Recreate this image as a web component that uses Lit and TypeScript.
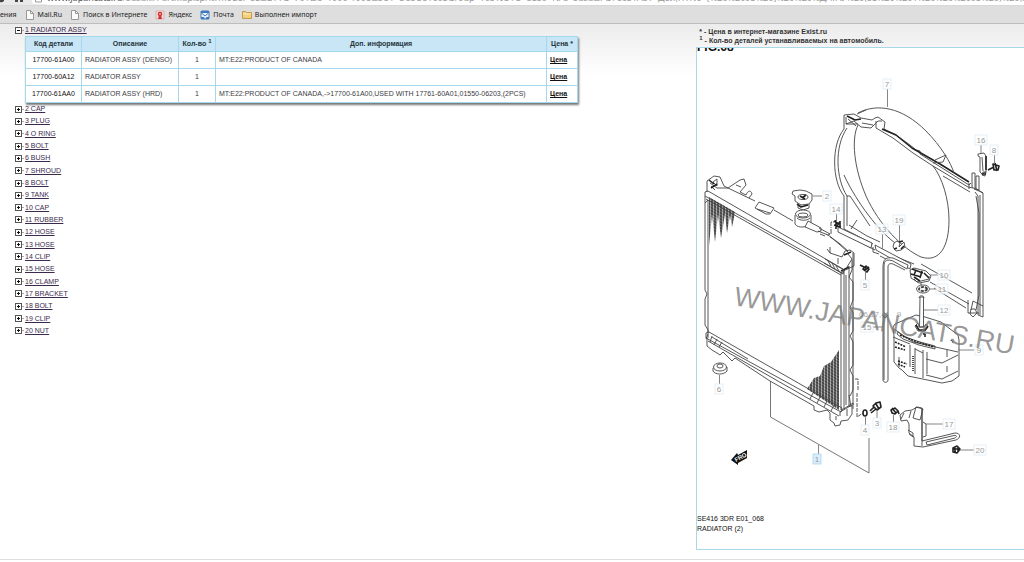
import { LitElement, html, svg, css } from "lit";
import { customElement, property } from "lit/decorators.js";

type Part = { code: string; name: string; qty: number; info: string };

const PARTS: Part[] = [
  { code: "17700-61A00", name: "RADIATOR ASSY (DENSO)", qty: 1, info: "MT:E22:PRODUCT OF CANADA" },
  { code: "17700-60A12", name: "RADIATOR ASSY", qty: 1, info: "" },
  { code: "17700-61AA0", name: "RADIATOR ASSY (HRD)", qty: 1, info: "MT:E22:PRODUCT OF CANADA,->17700-61A00,USED WITH 17761-60A01,01550-06203,(2PCS)" },
];

const GROUPS = [
  "2 CAP", "3 PLUG", "4 O RING", "5 BOLT", "6 BUSH", "7 SHROUD", "8 BOLT", "9 TANK", "10 CAP", "11 RUBBER",
  "12 HOSE", "13 HOSE", "14 CLIP", "15 HOSE", "16 CLAMP", "17 BRACKET", "18 BOLT", "19 CLIP", "20 NUT",
];

const CALLOUTS: [string, number, number][] = [
  ["7", 887, 84], ["16", 981, 140], ["8", 994, 150], ["2", 827, 196], ["14", 836, 209], ["19", 899, 220],
  ["13", 882, 229], ["5", 865, 285], ["10", 944, 275], ["11", 942, 289], ["12", 944, 310], ["15", 867, 327],
  ["9", 979, 350], ["6", 719, 389], ["3", 877, 423], ["4", 865, 430], ["18", 893, 427], ["17", 949, 424],
  ["20", 980, 450], ["1", 817, 459],
];

const LEADERS =
  "M887.500 89V107M981 145V153M994.500 155V164M822 196H813M836.500 213V222M899.500 225V241M882.500 234V249M865.500 280V271" +
  "M938 275H930M936 289H929M938 310H924M873 327H884M974 350H958M719.500 384V375M877 418V411M865.500 425V416M893.500 422V415M943 424H926M974 450H960M818.500 445V454";

@customElement("browser-bar")
export class BrowserBar extends LitElement {
  static styles = css`
    :host { display: block; font-family: "Noto Sans", "Liberation Sans", sans-serif; }
    .address { display: flex; align-items: flex-end; height: 6px; overflow: hidden; background: #fff; border-bottom: 1px solid #d8d8d8; box-sizing: border-box; }
    .nav { display: block; width: 47px; height: 6px; flex: none; background: #e9e9e9; }
    .host, .path { height: 14px; font: 9px/14px "Noto Sans", sans-serif; color: #999; }
    .host { color: #555; flex: none; }
    .path { flex: 1; min-width: 0; border: 0; padding: 0; margin: 0; background: none; outline: none; }
    .bookmarks { display: flex; align-items: center; height: 17px; background: #dedede; border-bottom: 1px solid #bdbdbd; }
    .bookmark { display: flex; align-items: center; gap: 3px; margin-right: 8px; font-size: 7px; line-height: 16px; color: #222; text-decoration: none; white-space: nowrap; }
    .icon { width: 10px; height: 10px; flex: none; }
  `;

  private page = svg`<path d="M1.500.500h4l3 3v6h-7z" fill="#fafafa" stroke="#999"/><path d="M5.500.500v3h3" fill="none" stroke="#999"/>`;

  private mark(icon: unknown, text: string) {
    return html`<a class="bookmark" href="#"><svg class="icon" viewBox="0 0 10 10" aria-hidden="true">${icon}</svg>${text}</a>`;
  }

  render() {
    return html`
      <div class="address">
        <svg class="nav" viewBox="0 0 47 6" aria-hidden="true">
          <path d="M0 0h4v2q-2 2-4 1z" fill="#444"/><path d="M15 0h3v3h-3zM20 0h3v3h-3z" fill="#444"/>
          <path d="M32 0h15v5H34q-2 0-2-3z" fill="#fff"/><path d="M35.500 0v3h6v-3" fill="none" stroke="#999"/>
        </svg>
        <label class="host" for="url">www.japancats.ru</label>
        <input class="path" id="url" readonly value="/Suzuki/PartMap.sprit?model=SE&BTTG=701&C=1990-1998&SUT=3C8OST603Group=Y05TIOTO=SE59=NAI=Suzu&FGTC631AST=Дей(HTNo=[%20%2093%20]%20%20%ДАТАУ%20(SE%20%201%20%20%2093%20)%20(SE%20)" />
      </div>
      <nav class="bookmarks">
        <a class="bookmark" href="#">ения</a>
        ${this.mark(this.page, "Mail.Ru")}
        ${this.mark(this.page, "Поиск в Интернете")}
        ${this.mark(svg`<path d="M1 1h8v8H1z" fill="#f6dcdc" stroke="#c99" stroke-width=".6"/><circle cx="5" cy="4" r="2.300" fill="#c33"/><path d="M3 9l1-4h2l1 4z" fill="#c33"/><circle cx="5" cy="4" r=".8" fill="#fff"/>`, "Яндекс")}
        ${this.mark(svg`<rect x=".5" y=".5" width="9" height="9" rx="1.500" fill="#3d79bd"/><path d="M1.500 3h7v4h-2l-1.500 2L4 7H1.500z" fill="#e9f2fb"/><path d="M1.500 3L5 6l3.500-3" fill="none" stroke="#3d79bd"/>`, "Почта")}
        ${this.mark(svg`<path d="M.5 8.500v-7h3l1 1h5v6z" fill="#f3cf7b" stroke="#b98b35" stroke-width=".8"/><path d="M1 4h8" stroke="#fff0bd"/>`, "Выполнен импорт")}
      </nav>
    `;
  }
}

@customElement("tree-item")
export class TreeItem extends LitElement {
  @property() label = "";
  @property({ type: Boolean }) open = false;
  static styles = css`
    :host { display: flex; align-items: center; font: 7px/12px "Liberation Sans", Arial, sans-serif; }
    .toggle { width: 10px; height: 7px; padding: 0; border: 0; background: none; display: flex; flex: none; }
    .sign { width: 10px; height: 7px; }
    .link { color: #3b2a4d; text-decoration: underline; white-space: nowrap; }
  `;
  render() {
    return html`
      <button class="toggle" aria-label=${this.label}>
        <svg class="sign" viewBox="0 0 10 7" fill="none" shape-rendering="crispEdges">
          <path d="M.5.500h6v6h-6z" fill="#fff" stroke="#555"/>
          <path d="M2 3.500h3" stroke="#111"/>
          ${this.open ? "" : svg`<path d="M3.500 2v3" stroke="#111"/>`}
          <path d="M7 3.500h2" stroke="#aaa"/>
        </svg>
      </button>
      <a class="link" href="#">${this.label}</a>
    `;
  }
}

@customElement("parts-table")
export class PartsTable extends LitElement {
  static styles = css`
    :host { display: block; font: 7px/10px "Liberation Sans", Arial, sans-serif; color: #3c3c44; }
    .table { table-layout: fixed; width: 553px; border-collapse: collapse; background: #fff; box-shadow: 1px 2px 2px #777; }
    .code { width: 56px; }
    .name { width: 97px; }
    .qty { width: 37px; }
    .price { width: 31px; }
    th, td { border: 1px solid #a5d8ec; padding: 3px; white-space: nowrap; text-align: left; }
    th { background: #c8e6f5; color: #26333b; text-align: center; padding: 2px 0; }
    td.num { color: #111; text-align: center; padding: 3px 0; }
    td.count { text-align: center; }
    .buy { color: #111; font-weight: bold; }
    sup { font-size: 6px; line-height: 0; }
  `;
  render() {
    return html`
      <table class="table">
        <colgroup><col class="code" /><col class="name" /><col class="qty" /><col /><col class="price" /></colgroup>
        <thead><tr><th>Код детали</th><th>Описание</th><th>Кол-во <sup>1</sup></th><th>Доп. информация</th><th>Цена *</th></tr></thead>
        <tbody>
          ${PARTS.map((p) => html`<tr>
            <td class="num">${p.code}</td><td>${p.name}</td><td class="count">${p.qty}</td><td>${p.info}</td>
            <td><a class="buy" href="#">Цена</a></td>
          </tr>`)}
        </tbody>
      </table>
    `;
  }
}

@customElement("parts-diagram")
export class PartsDiagram extends LitElement {
  static styles = css`
    :host { display: block; overflow: hidden; background: #fff; border: 1px solid #a9d9e8; border-right: 0; }
    .drawing { display: block; width: 400px; height: 501px; font-family: "Liberation Sans", Arial, sans-serif; }
    .ink { fill: none; stroke: #444; stroke-width: 0.9; stroke-linejoin: round; }
    .solid { fill: #fff; }
    .heavy { stroke-width: 1.6; stroke: #222; }
    .leader { fill: none; stroke: #777; stroke-width: 0.9; }
    .box { fill: #fff; fill-opacity: 0.7; stroke: #dcebf3; stroke-width: 0.8; }
    .box.on { fill: #cbe6f8; stroke: #a9d4ee; }
    .num { font-size: 8px; fill: #999; text-anchor: middle; }
    .mark { font-size: 27px; fill: #777; fill-opacity: 0.75; }
    .faint { font-size: 8px; fill: #aaa; }
    .title { font-size: 12px; font-weight: bold; fill: #111; }
    .caption { font-size: 7px; fill: #111; }
    .arrow { font-size: 6px; font-weight: bold; fill: #fff; }
  `;

  private shroud() {
    return svg`<g class="ink">
      <path d="M844 115V129C831 145 832 181 844 196V229M847 128C834 147 836 179 847 196V226M844 115L854 114L861 118L872 120L875 118L878 117L885 122L884 129L896 135L910 145L916 150L920 151V154L969 185L971 183"/>
      <path class="heavy" d="M882 129L896 135L912 148L940 164L969 182M847 116L855 120L861 119"/>
      <path d="M846 117V124L854 121L861 127L871 128L878 121L882 121M857 114L866 110M848 119L856 126M846 124L858 124M862 123L873 125M876 121V128L893 138L913 153L933 166L968 187L973 188"/>
      <path d="M858 113C877 103 902 107 926 131C941 146 951 163 954 173M858 125C851 139 854 168 866 196C879 225 903 249 921 257C940 263 949 246 949 220C949 199 942 177 933 166"/>
      <path d="M844 175C853 195 874 227 895 243M935 160L946 155L943 162L933 163M943 176L970 192M847 196H850L870 226M857 220L851 229"/>
      <path class="solid" d="M972 173H975V189L972 187zM976 176H979V190L976 189z"/>
      <path d="M969 183V189M974 189L979 191L983 193V317L978 315V196L975 192M980 195V315M976 196L979 213V295L976 310M971 310L973 301L983 306M983 193L975 188"/>
      <path d="M844 229L873 244M848 236L875 250M884 252L914 264M921 264L972 293M930 282L969 304M934 288L966 308M968 300V313H979M971 309L975 309L977 313L973 317L970 314z"/>
      <path d="M849 225L867 236L880 242"/>
    </g>`;
  }

  private radiator() {
    return svg`<g class="ink">
      <path d="M709 197L735 212V213L732 227L730 215L727 233L725 214L721 238L718 214L715 242L712 214L709 246z" fill="url(#fins)" stroke="none"/>
      <path d="M839 350V410L807 389L814 378L820 376L824 366L831 362z" fill="url(#fins)" stroke="none"/>
      <path d="M707 192V181L714 176L720 177L724 186L728 188M710 183L717 188L728 188L740 180L744 179L746 185L740 192L746 195C748 190 751 190 752 194L749 198M728 188L755 201M774 210L793 221M812 225L831 237L848 252M736 185L741 187M713 182L717 179L717 186zM711 186L715 190"/>
      <path class="heavy" d="M709 180L714 184M711 188L717 184M841 271L849 267M844 255L851 252"/>
      <path class="solid" d="M755 208L759 202L774 208L770 214L766 214zM757 209L770 213"/>
      <path d="M705 192L708 191L843 269L842 273L705 196zM706 199L841 275"/>
      <path d="M705 196V203M705 203L708 200V333M705 203V290L707 294L705 299V325L708 330V338"/>
      <path d="M841 273V410M844 270V409M849 266V407M853 253V405M846 275V405M852 260V270L849 277L853 282V300L850 308L853 312V331L850 336L853 342V365L850 370L853 376V390L850 396"/>
      <path d="M843 271L854 266V253L850 250L845 251L842 257L830 253L827 249M830 237L839 243L848 251M848 254L852 259L847 267M830 247V253M838 258V264"/>
      <path d="M825 259L844 270L843 274L824 263M828 261L831 266M832 263L835 269M836 266L839 271"/>
      <path d="M706 333L709 332L842 408L841 412L706 338zM708 341L839 416M712 337L748 359M707 338V346L712 350L717 353L720 355L723 352L729 358L732 361L735 358L770 381L814 406"/>
      <path d="M708 334L706 339M712 336L710 342M717 339L714 345M722 342L719 347M813 393L810 399M820 397L817 403M827 401L824 407M834 405L831 411"/>
      <path d="M814 406V410L819 412L827 410L830 413V420L834 423L835 426L840 425L841 421L848 420L852 414V405L840 412V416M836 416V420M847 409V416M842 410L853 403V409M849 395L851 407"/>
      <path d="M770.500 381V417L869 473V438" stroke="#666"/>
      <path d="M855 379H858V391M857 393V417L863 413" stroke-dasharray="4 1"/>
    </g>
    <g class="ink">
      <path class="solid" d="M793 191L800 190L806 191L812 194L812 200L809 204L801 205L795 201L795 196L792 194z"/>
      <ellipse cx="803" cy="197" rx="5" ry="2.500"/><path class="heavy" d="M800 196L805 199M806 195L802 198M797 204L801 207L808 205"/>
      <path d="M798 205V208L803 210L809 208V204"/>
      <ellipse class="solid" cx="803" cy="214" rx="7.500" ry="4"/><ellipse cx="803" cy="215" rx="5" ry="2"/>
      <path d="M795 215V224C798 229 808 227 811 224V215M797 218C800 221 807 221 810 218"/>
      <path class="solid" d="M808 221L821 228V231L817 232L805 227zM819 228L830 234L828 235L818 231M820 234L825 236"/>
      <path d="M831 234V222H836" stroke-dasharray="5 1 1 1"/>
      <ellipse cx="720" cy="367" rx="6.500" ry="4"/><ellipse cx="720" cy="366" rx="3" ry="2"/><path d="M713 368V371C715 375 724 375 727 371V367"/>
    </g>`;
  }

  private fittings() {
    return svg`<g class="ink">
      <path class="solid" d="M838 227L872 243L871 248L838 232zM875 245L911 264L910 269L876 250z"/>
      <path d="M873 247V252L879 254M880 256L888 260"/>
      <path class="heavy" d="M834 221L839 224M836 227L840 222M834 225L841 227M836 220V229M840 221V228"/>
      <path class="solid" d="M884 380V266C884 260 887 259 893 261L907 269L908 265L893 258C886 257 883 259 883 267V380C883 383 888 383 888 380V267C888 264 890 263 893 264L905 270"/>
      <path d="M883 316L885 318L888 315"/>
      <path class="solid" d="M894 243L897 241L900 243L899 247L904 242L905 247L901 250L896 251L893 247z"/>
      <path class="heavy" d="M899 242L903 241M901 249L904 246M894 249L897 248"/>
      <path class="solid" d="M910 270L914 268L926 271L931 276L929 281L919 283L911 278z"/>
      <path class="heavy" d="M912 269L923 273M911 274L921 277M914 277L920 281M924 273L929 278M916 270L914 275M922 271L920 278"/>
      <path d="M914 279L917 282L929 279V276M921 283V285"/>
      <ellipse class="solid" cx="923" cy="289" rx="6.500" ry="4"/><ellipse cx="923" cy="289" rx="4" ry="2" stroke-dasharray="3 1" stroke-width="2"/>
      <path class="heavy" d="M860 265L866 268M866 266L869 269L867 272L863 269zM865 270L869 267M988 170L994 167M993 164L999 166L998 170L994 170zM995 163L997 171"/>
      <path class="solid" d="M978 154L984 153L986 156V172L982 174L980 172V157L978 156zM982 157L983 171M983 172L986 172L985 176L982 175z"/>
      <path class="heavy" d="M986 156V170M982 174L986 174"/>
      <path class="solid" d="M893 327L895 324L916 315L925 317L941 322L958 335L959 340V376L952 381L942 383L908 376L902 370L899 368L894 362V336z"/>
      <path d="M894 329L913 342L958 352M893 337L910 344M899 357V367M910 345V367M915 348V374M923 350V378M927 352V374M915 349L923 353M926 359L942 363L958 355M926 375L942 379L958 371M947 350V357M947 366V372"/>
      <path d="M898 332L905 337L920 342L935 346L935 349L919 345L903 339L897 334z"/>
      <path class="heavy" stroke-dasharray="2 1" d="M900 335L917 342L934 347M895 342L906 347M895 347L905 350M898 361L907 364M898 364L905 367"/>
      <path class="heavy" stroke-dasharray="1 1" d="M913 356V372M951 340L954 343"/>
      <path class="solid" d="M920 297H923.500V327H919.500zM915 326L918 323L919 327H924L926 324L928 327L925 331L918 331zM919 298C919 295 924 295 924 298"/>
      <path class="heavy" d="M916 325L919 330L925 330L928 326M923 334H925V337"/>
      <ellipse cx="865" cy="413" rx="2" ry="3" class="heavy"/>
      <path class="heavy" d="M870 411L874 407M871 413L876 409M876 403L880 402L881 407L877 410L873 406zM876 404L879 409M891 410L895 408L898 411L895 414L892 413zM898 411L899 414M892 408L896 413M953 448L957 446L960 449L957 453L953 452zM953 449H960M955 447V452M958 447V451"/>
      <path class="solid" d="M901 421L900 415L905 411L912 410L917 407L922 408V441L955 433C961 433 961 438 956 440L923 447L914 446V437L909 433V424L907 420zM916 407L913 418L920 420L923 409z"/>
      <path d="M922 409V446M926 442L954 435.500C957 435 957 437 955 438L927 445zM923 422L926 424V436L923 437M908 430L913 433V437L909 434M904 413L901 419M911 411L909 418"/>
    </g>`;
  }

  render() {
    return html`
      <svg class="drawing" viewBox="697 48 400 501" role="img" aria-label="RADIATOR (2)">
        <defs>
          <pattern id="fins" width="3" height="3" patternUnits="userSpaceOnUse" patternTransform="skewY(30)">
            <path d="M0 0H3V3H0z" fill="#bbb"/><path d="M1 0V3M0 1H2.500" stroke="#222" stroke-width="1.100"/>
          </pattern>
        </defs>
        <text class="title" x="697" y="51">FIG.68</text>
        ${this.shroud()}${this.radiator()}
        <text class="faint" x="859" y="317">06,17,40,19</text>
        ${this.fittings()}
        <path class="leader" d=${LEADERS} />
        ${CALLOUTS.map(([n, x, y]) => svg`<rect class=${n === "1" ? "box on" : "box"} x=${x - 2 - n.length * 2} y=${y - 5} width=${4 + n.length * 4} height="10"/><text class="num" x=${x} y=${y + 3}>${n}</text>`)}
        <text class="mark" transform="translate(733 305) rotate(10)">WWW.JAPANCATS.RU</text>
        <path d="M731 460L737 453L738 455L747 450V458L738 463V465z" fill="#111"/>
        <text class="arrow" transform="translate(736 462) rotate(-28)">FRO</text>
        <text class="caption" x="697" y="521">SE416 3DR E01_068</text>
        <text class="caption" x="697" y="531">RADIATOR (2)</text>
      </svg>
    `;
  }
}

@customElement("app-root")
export class AppRoot extends LitElement {
  static styles = css`
    :host { display: block; min-height: 100vh; background: #fff; overflow: hidden; }
    .page { display: grid; grid-template-columns: minmax(0, 17fr) minmax(0, 8fr); background: linear-gradient(#ececec, #fff 52px); border-bottom: 1px solid #ddd; padding-bottom: 9px; }
    .tree { padding: 0 0 0 15px; }
    .first { height: 12px; }
    .details { padding-left: 10px; }
    .list { display: grid; grid-auto-rows: 1fr; min-height: 234px; margin: 0; }
    .legend { margin: 0; padding: 3px 3px 2px; font: bold 7px/9px "Liberation Sans", Arial, sans-serif; color: #333; }
    .line { display: block; }
    sup { font-size: 6px; line-height: 0; }
  `;
  render() {
    return html`
      <browser-bar></browser-bar>
      <main class="page">
        <section class="tree">
          <tree-item class="first" open label="1 RADIATOR ASSY"></tree-item>
          <parts-table class="details"></parts-table>
          <div class="list">${GROUPS.map((g) => html`<tree-item label=${g}></tree-item>`)}</div>
        </section>
        <section>
          <p class="legend">
            <span class="line">* - Цена в интернет-магазине Exist.ru</span>
            <span class="line"><sup>1</sup> - Кол-во деталей устанавливаемых на автомобиль.</span>
          </p>
          <parts-diagram></parts-diagram>
        </section>
      </main>
    `;
  }
}
